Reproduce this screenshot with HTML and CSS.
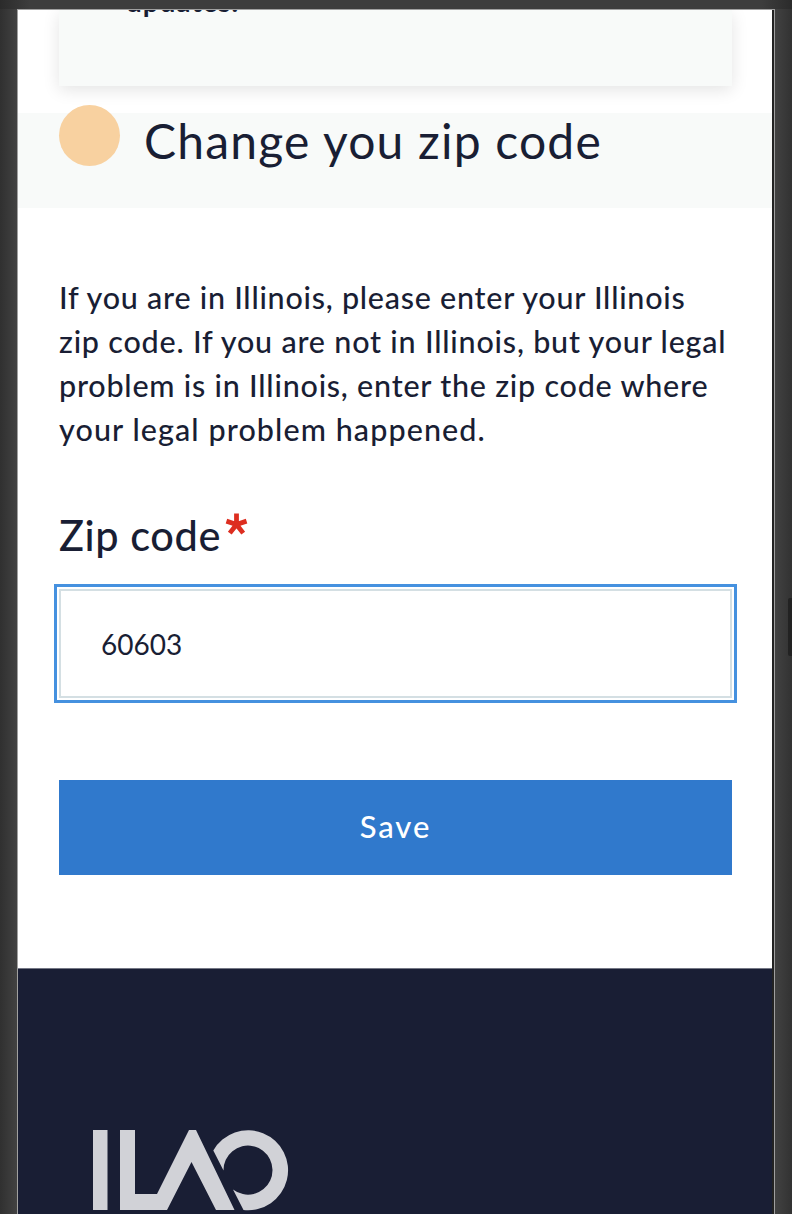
FILE: index.html
```html
<!DOCTYPE html>
<html lang="en">
<head>
<meta charset="utf-8">
<title>Change you zip code</title>
<link rel="stylesheet" href="styles.css">
</head>
<body>
<div class="device">
  <main class="page">
    <section class="card"><p class="card-text">updates.</p></section>
    <header class="band">
      <span class="dot"></span>
      <h1 class="title">Change you zip code</h1>
    </header>
    <form class="form">
      <p class="intro">
        <span class="line line-a">If you are in Illinois, please enter your Illinois</span>
        <span class="line line-b">zip code. If you are not in Illinois, but your legal</span>
        <span class="line line-c">problem is in Illinois, enter the zip code where</span>
        <span class="line line-d">your legal problem happened.</span>
      </p>
      <label class="label" for="zip"><span class="label-text">Zip code</span><svg class="required" viewBox="0 0 24 22" aria-label="required"><path d="M12 11.500V0M12 11.500L1.500 8M12 11.500L22.500 8M12 11.500L5 20.500M12 11.500L19 20.500" /></svg></label>
      <input class="input" id="zip" type="text" value="60603">
      <button class="save" type="button">Save</button>
    </form>
    <footer class="footer">
      <svg class="logo" viewBox="0 0 196 81" aria-label="ILAO">
        <path d="M0 0H14.500V80H0Z"/>
        <path d="M27 0H42V64H64L96 0H103L141.500 80H123L98.500 32L74 80H27Z"/>
        <path d="M120.300 20.500A40 40 0 1 1 150.500 80L140 59.500A24.500 24.500 0 1 0 130.500 40.500Z"/>
      </svg>
    </footer>
  </main>
  <div class="gutter"></div>
</div>
<div class="scroll-thumb"></div>
</body>
</html>
```
FILE: styles.css
```css
* { box-sizing: border-box; }
body {
  margin: 0;
  width: 792px;
  height: 1214px;
  padding: 9px 17px 0;
  overflow: hidden;
  position: relative;
  background: linear-gradient(90deg, #303030 0, #424242 17px, #424242 775px, #323232 792px);
  color: #191e34;
  font-family: Lato, "Open Sans", sans-serif;
}
body::before {
  content: "";
  position: absolute;
  inset: 0 0 auto;
  height: 9px;
  background: linear-gradient(90deg, #2b2b2b, #3d3d3d 30px, #3d3d3d 762px, #2b2b2b);
}
.device {
  display: flex;
  position: relative;
  width: 758px;
  height: 1205px;
  border: 1px solid #a0a0a0;
  border-bottom: 0;
  overflow: hidden;
}
.page { width: 754px; flex: none; background: #fff; display: flex; flex-direction: column; }
.gutter { width: 2px; background: #222; }
.card {
  height: 76px;
  flex: none;
  margin: 0 40px 0 41px;
  padding-left: 67px;
  background: #f8faf9;
  box-shadow: 0 4px 16px rgba(0, 0, 0, .11);
}
.card-text { margin: -23px 0 0; font-size: 28px; line-height: 28px; font-weight: 700; letter-spacing: .9px; }
.band {
  height: 95px;
  flex: none;
  margin-top: 27px;
  padding-left: 41px;
  display: flex;
  align-items: flex-start;
  gap: 24px;
  background: #f8faf9;
}
.dot { width: 61px; height: 61px; margin-top: -8px; border-radius: 50%; background: #f8d1a0; }
.title { margin: -1px 0 0; font-size: 48px; line-height: 58px; font-weight: 400; letter-spacing: 1.2px; white-space: nowrap; }
.form { height: 760px; flex: none; padding: 67px 40px 0 41px; display: flex; flex-direction: column; }
.intro { margin: 0; font-size: 30.500px; line-height: 44px; font-weight: 500; }
.line { display: block; white-space: nowrap; }
.line-a { letter-spacing: .75px; }
.line-b { letter-spacing: .8px; }
.line-c { letter-spacing: .78px; }
.line-d { letter-spacing: 1.08px; }
.label { display: flex; height: 50px; margin-top: 59px; gap: 4px; font-size: 41.500px; line-height: 50px; font-weight: 500; }
.label-text { letter-spacing: .6px; }
.required { width: 23px; height: 22px; margin-top: 3px; fill: none; stroke: #dd2e20; stroke-width: 5; }
.input {
  width: 100%;
  height: 109px;
  margin: 29px 0 0;
  padding: 0 40px;
  border: 2px solid #d4dfe3;
  outline: 3px solid #4591df;
  outline-offset: 2px;
  background: #fff;
  color: inherit;
  font: 400 28px Lato, sans-serif;
}
.save {
  height: 95px;
  margin-top: 82px;
  border: 0;
  padding: 0 0 3px;
  background: #3079cc;
  color: #fff;
  font: 500 31px Lato, sans-serif;
  letter-spacing: 1.9px;
}
.footer { flex: 1; border-top: 1px solid #747785; padding: 161px 0 0 75px; background: #191e34; }
.logo { display: block; width: 196px; height: 81px; fill: #d1d2d7; }
.scroll-thumb { position: absolute; left: 788px; top: 598px; width: 8px; height: 58px; border-radius: 2px; background: #222; }
```
